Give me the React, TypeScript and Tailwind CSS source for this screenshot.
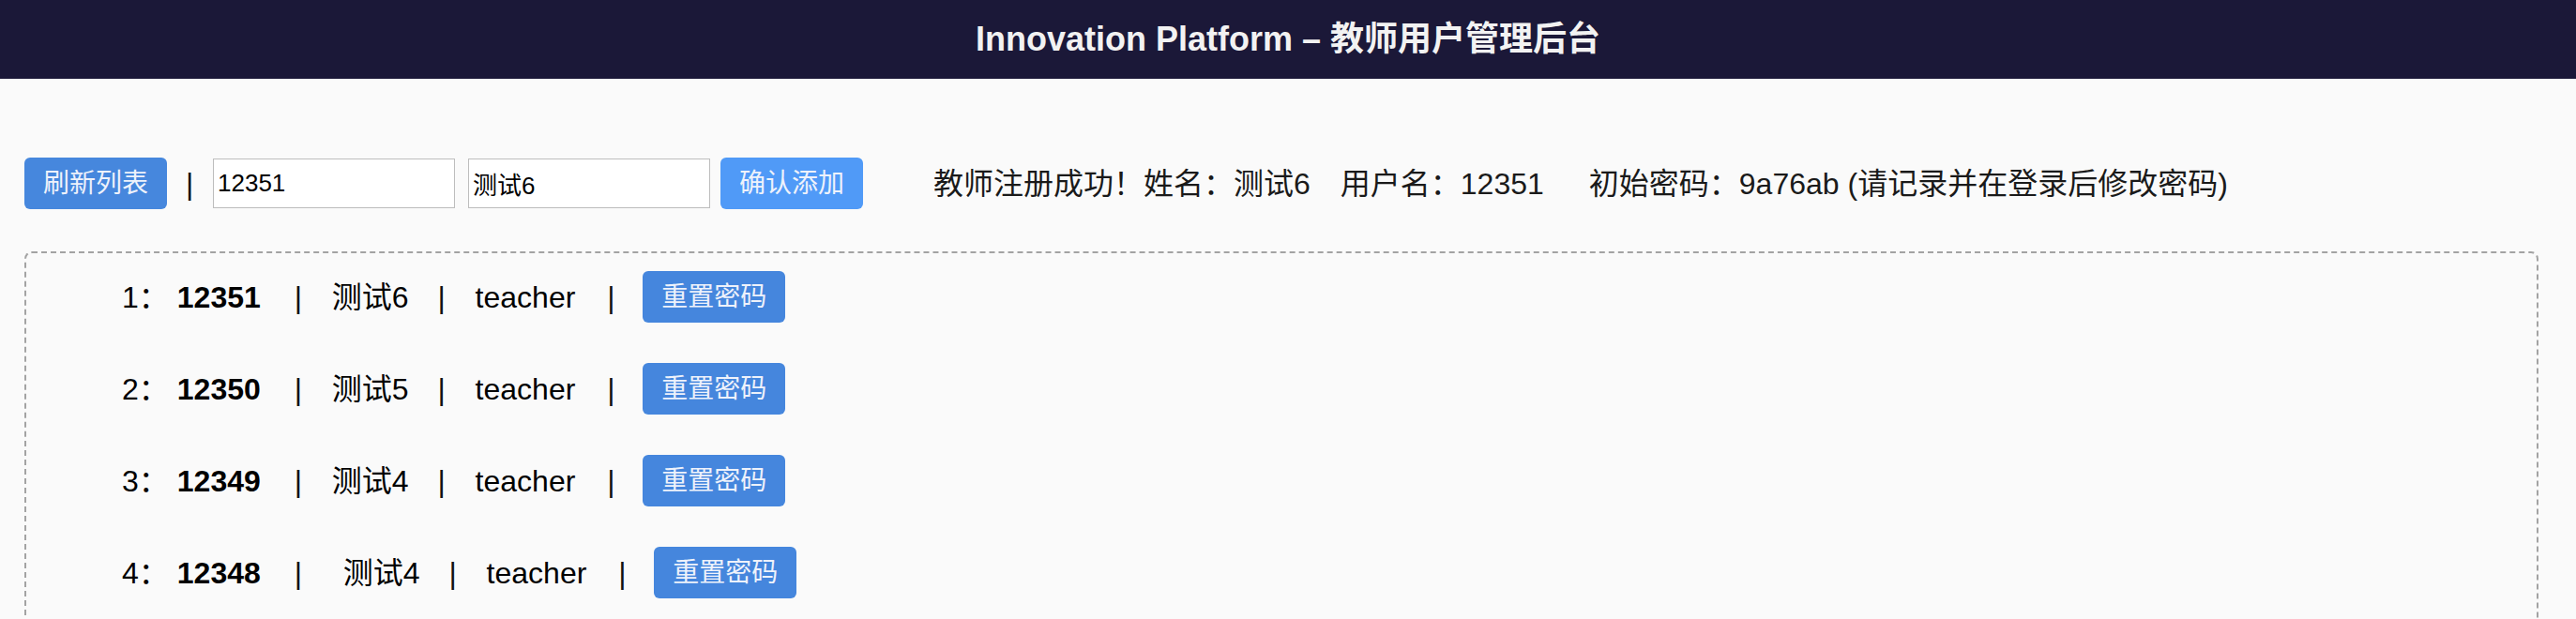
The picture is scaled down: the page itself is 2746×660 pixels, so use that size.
import React from "react";

const rows = [
  { idx: 1, user: "12351", name: "测试6", shift: false },
  { idx: 2, user: "12350", name: "测试5", shift: false },
  { idx: 3, user: "12349", name: "测试4", shift: false },
  { idx: 4, user: "12348", name: "测试4", shift: true },
];

const font = { fontFamily: '"Liberation Sans", "Noto Sans CJK SC", sans-serif' };

function Pipe({ className = "" }: { className?: string }) {
  return (
    <span className={`inline-block w-[8px] text-center text-[32px] leading-none text-[#111] ${className}`}>|</span>
  );
}

export default function App() {
  return (
    <div className="min-h-[660px] bg-[#fafafa] text-black" style={font}>
      <header className="flex h-[84px] items-center justify-center bg-[#1b1838]">
        <h1 className="text-[36px] font-semibold leading-none text-[#f2f2f2]">
          Innovation Platform – 教师用户管理后台
        </h1>
      </header>

      <main className="px-[26px] pt-[84px]">
        <div className="flex items-center">
          <button className="flex h-[55px] w-[152px] items-center justify-center rounded-[6px] bg-[#4687dd] text-[28px] leading-none text-[#eef2fb]">
            刷新列表
          </button>
          <Pipe className="ml-[20px]" />
          <input
            readOnly
            value="12351"
            className="ml-[21px] h-[53px] w-[258px] border border-[#bdbdbd] bg-white px-[4px] text-[26px] text-black outline-none"
            style={font}
          />
          <input
            readOnly
            value="测试6"
            className="ml-[14px] h-[53px] w-[258px] border border-[#bdbdbd] bg-white px-[4px] text-[26px] text-black outline-none"
            style={font}
          />
          <button className="ml-[11px] flex h-[55px] w-[152px] items-center justify-center rounded-[6px] bg-[#509af7] text-[28px] leading-none text-[#eef2fb]">
            确认添加
          </button>
          <p className="ml-[75px] text-[32px] leading-none text-[#1a1a1a]">
            <span>教师注册成功！姓名：测试6</span>
            <span className="ml-[32px]">用户名：12351</span>
            <span className="ml-[48px]">初始密码：9a76ab (请记录并在登录后修改密码)</span>
          </p>
        </div>

        <div className="mr-[14px] mt-[45px] rounded-[8px] border-2 border-dashed border-[#a3a3a3] pb-[40px] pl-[102px] pt-[19px]">
          <ul className="flex flex-col gap-[43px]">
            {rows.map((r) => (
              <li key={r.idx} className="flex h-[55px] items-center text-[32px] leading-none">
                <span>{r.idx}：</span>
                <b className="ml-[9px] font-bold">{r.user}</b>
                <Pipe className="ml-[36px]" />
                <span className={r.shift ? "ml-[44px]" : "ml-[32px]"}>{r.name}</span>
                <Pipe className="ml-[31px]" />
                <span className="ml-[32px]">teacher</span>
                <Pipe className="ml-[34px]" />
                <button className="ml-[30px] flex h-[55px] w-[152px] items-center justify-center rounded-[6px] bg-[#4586dd] text-[28px] leading-none text-[#eef2fb]">
                  重置密码
                </button>
              </li>
            ))}
          </ul>
        </div>
      </main>
    </div>
  );
}
